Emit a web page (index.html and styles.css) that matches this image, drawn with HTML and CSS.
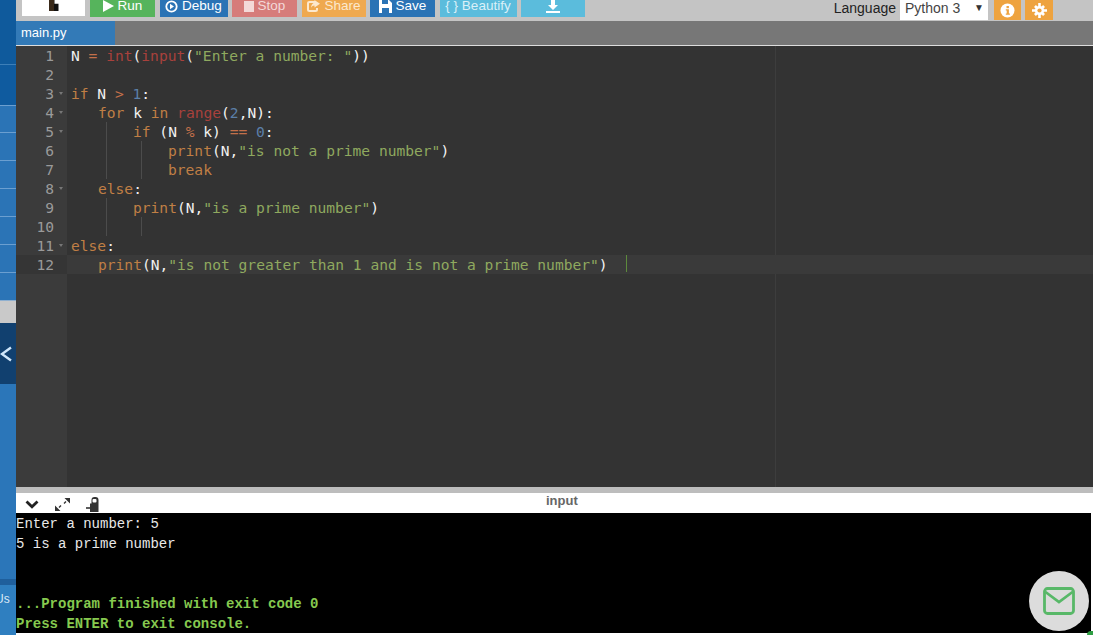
FILE: index.html
```html
<!DOCTYPE html>
<html lang="en">
<head>
  <meta charset="UTF-8" />
  <title>Online Python Compiler</title>
  <link rel="stylesheet" href="styles.css">
</head>
<body>
  <div class="sidebar">
    <div class="side-item tall"></div>
    <div class="side-item dark"></div>
    <div class="side-item first"></div>
    <div class="side-item"></div>
    <div class="side-item"></div>
    <div class="side-item"></div>
    <div class="side-item"></div>
    <div class="side-item"></div>
    <div class="side-item last"></div>
    <div class="side-gap"></div>
    <div class="side-toggle">
      <svg width="12" height="18" viewBox="0 0 12 18"><path d="M11 2.500 2 9l9 6.500" fill="none" stroke="#cfe6fb" stroke-width="2.400"/></svg>
    </div>
    <div class="side-fill"></div>
    <div class="side-us">Us</div>
  </div>

  <div class="main">
    <div class="toolbar">
      <div class="logo"><span class="logo-mark"></span></div>
      <div class="btn green run">
        <svg width="11" height="12" viewBox="0 0 11 12"><path d="M0 0l11 6-11 6z" fill="#fff"/></svg>Run
      </div>
      <div class="btn blue debug">
        <svg width="13" height="13" viewBox="0 0 13 13"><circle cx="6.500" cy="6.500" r="5.200" fill="none" stroke="#fff" stroke-width="1.800"/><path d="M5 3.800l4 2.700-4 2.700z" fill="#fff"/></svg>Debug
      </div>
      <div class="btn red stop">
        <svg width="10" height="11" viewBox="0 0 10 11"><rect width="10" height="11" fill="#f3d9d8"/></svg>Stop
      </div>
      <div class="btn orange share">
        <svg width="14" height="13" viewBox="0 0 14 13"><path d="M9 2H3.500A1.500 1.500 0 0 0 2 3.500v6A1.500 1.500 0 0 0 3.500 11h6A1.500 1.500 0 0 0 11 9.500V8" fill="none" stroke="#fce8cd" stroke-width="2"/><path d="M8.500 0 14 3.800 8.500 7.500V5.500C6.500 5.500 5.500 6.500 5 8c0-3 1.500-5 3.500-5.300z" fill="#fce8cd"/></svg>Share
      </div>
      <div class="btn blue save">
        <svg width="13" height="13" viewBox="0 0 13 13"><path d="M0 0h10l3 3v10H0z" fill="#fff"/><rect x="3" y="0" width="6" height="4" fill="#2a73b5"/><rect x="3" y="8" width="7" height="5" fill="#2a73b5"/></svg>Save
      </div>
      <div class="btn cyan beautify">{ } Beautify</div>
      <div class="btn cyan download">
        <svg width="14" height="13" viewBox="0 0 14 13"><path d="M5 0h4v5h3L7 10 2 5h3z" fill="#fff"/><rect y="11" width="14" height="2" fill="#fff"/></svg>
      </div>
      <div class="lang">
        <span class="lang-label">Language</span>
        <div class="lang-select"><span>Python 3</span><span class="caret">▼</span></div>
        <div class="square info">
          <svg width="15" height="15" viewBox="0 0 15 15"><circle cx="7.500" cy="7.500" r="7" fill="#fff"/><rect x="6.500" y="3" width="2.400" height="2.200" fill="#eea33f"/><path d="M5.800 6.300h3.100v4.200h1v1.200H5.800v-1.200h.9V7.500h-.9z" fill="#eea33f"/></svg>
        </div>
        <div class="square">
          <svg width="15" height="15" viewBox="0 0 15 15"><path d="M6.200 0h2.600v15H6.200zM0 6.200h15v2.600H0zM2 3.900 3.900 2 13 11.100 11.100 13zM11.100 2 13 3.900 3.900 13 2 11.100z" fill="#fff"/><circle cx="7.500" cy="7.500" r="4.600" fill="#fff"/><circle cx="7.500" cy="7.500" r="2.100" fill="#eea33f"/></svg>
        </div>
      </div>
    </div>

    <div class="tabs"><div class="tab">main.py</div></div>

    <div class="editor">
      <div class="gutter">
        <div class="num">1</div>
        <div class="num">2</div>
        <div class="num fold">3</div>
        <div class="num fold">4</div>
        <div class="num fold">5</div>
        <div class="num">6</div>
        <div class="num">7</div>
        <div class="num fold">8</div>
        <div class="num">9</div>
        <div class="num">10</div>
        <div class="num fold">11</div>
        <div class="num current">12</div>
      </div>
      <div class="code">
        <div class="margin-line"></div>
        <div class="line">N <span class="op">=</span> <span class="fn">int</span>(<span class="fn">input</span>(<span class="str">"Enter a number: "</span>))</div>
        <div class="line"></div>
        <div class="line"><span class="kw">if</span> N <span class="op">&gt;</span> <span class="n">1</span>:</div>
        <div class="line i1"><span class="kw">for</span> k <span class="kw">in</span> <span class="fn">range</span>(<span class="n">2</span>,N):</div>
        <div class="line i2 g1"><span class="kw">if</span> (N <span class="op">%</span> k) <span class="op">==</span> <span class="n">0</span>:</div>
        <div class="line i3 g1 g2"><span class="kw">print</span>(N,<span class="str">"is not a prime number"</span>)</div>
        <div class="line i3 g1 g2"><span class="kw">break</span></div>
        <div class="line i1"><span class="kw">else</span>:</div>
        <div class="line i2 g1"><span class="kw">print</span>(N,<span class="str">"is a prime number"</span>)</div>
        <div class="line g1 g2"></div>
        <div class="line"><span class="kw">else</span>:</div>
        <div class="line i1 current"><span class="kw">print</span>(N,<span class="str">"is not greater than 1 and is not a prime number"</span>)<span class="cursor"></span></div>
      </div>
    </div>

    <div class="console-head">
      <div class="console-icons">
        <svg width="14" height="9" viewBox="0 0 14 9"><path d="M1.500 1.500 7 6.800l5.500-5.300" fill="none" stroke="#222" stroke-width="2.800"/></svg>
        <svg width="15" height="15" viewBox="0 0 15 15"><path d="M9.500 1H15v5.500zM5.500 14H0V8.500z" fill="#333"/><path d="M11 4.500 9 6.500M4 10.500l2-2" stroke="#333" stroke-width="1.400"/></svg>
        <svg width="13" height="15" viewBox="0 0 13 15"><path d="M4 15V6.500h1.500V3a3 3 0 0 1 3-3h1a3 3 0 0 1 3 3v12z" fill="#333"/><rect x="6.500" y="2" width="4" height="3.500" rx="1" fill="#fff"/><path d="M0 11h4" stroke="#333" stroke-width="1.600"/></svg>
      </div>
      <span class="console-title">input</span>
    </div>
    <div class="console">
      <div class="out">Enter a number: 5</div>
      <div class="out">5 is a prime number</div>
      <div class="out"></div>
      <div class="out"></div>
      <div class="out done">...Program finished with exit code 0</div>
      <div class="out done">Press ENTER to exit console.</div>
    </div>
  </div>

  <div class="mail">
    <svg width="32" height="28" viewBox="0 0 32 28"><rect x="1.500" y="1.500" width="29" height="25" rx="3" fill="none" stroke="#58b868" stroke-width="2.800"/><path d="M2.500 5 16 15 29.500 5" fill="none" stroke="#58b868" stroke-width="2.800"/></svg>
  </div>
  <div class="corner"></div>
</body>
</html>
```

FILE: styles.css
```css
html, body {
  margin: 0;
  height: 635px;
  overflow: hidden;
}
body {
  display: flex;
  font-family: "Liberation Sans", Arial, sans-serif;
  background: #fff;
}

/* left nav strip */
.sidebar {
  width: 16px;
  flex: none;
  display: flex;
  flex-direction: column;
  background: #2b76b9;
}
.side-item {
  height: 27px;
  border-bottom: 1px solid #6b9fd0;
  background: #2b74b6;
}
.side-item.tall {
  height: 64px;
  background: #0f5a9c;
  border-bottom-color: #3d7fb8;
}
.side-item.dark {
  height: 40px;
  background: #0f5b9f;
}
.side-item.first { height: 26px; }
.side-item.last { border-bottom: 0; }
.side-gap {
  height: 22px;
  background: #c9c9c9;
  border-top: 1px solid #8fb0d0;
}
.side-toggle {
  height: 61px;
  background: #11406f;
  display: flex;
  align-items: center;
}
.side-fill {
  flex: 1;
  border-bottom: 6px solid #1f5f9c;
}
.side-us {
  height: 50px;
  padding-top: 6px;
  box-sizing: border-box;
  font-size: 12px;
  line-height: 16px;
  color: #dbe9f6;
  background: #2f7fc0;
  overflow: hidden;
  text-indent: -5px;
}

.main {
  flex: 1;
  min-width: 0;
  display: flex;
  flex-direction: column;
}

/* toolbar */
.toolbar {
  height: 21px;
  flex: none;
  display: flex;
  gap: 4.5px;
  padding-left: 6px;
  background: #c4c4c4;
  overflow: hidden;
}
.logo {
  width: 63px;
  height: 16px;
  margin-right: 0.5px;
  background: #fff;
  display: flex;
  justify-content: center;
}
.logo-mark {
  width: 10px;
  height: 11px;
  background: linear-gradient(90deg, #3a2a1a 50%, #111 50%);
  clip-path: polygon(0 0, 60% 0, 60% 35%, 100% 35%, 100% 100%, 0 100%);
}
.btn {
  height: 17px;
  padding-bottom: 5px;
  box-sizing: border-box;
  display: flex;
  align-items: center;
  justify-content: center;
  gap: 4px;
  font-size: 13.5px;
  line-height: 14px;
  color: #fff;
}
.btn svg { flex: none; }
.run { width: 65px; }
.debug { width: 68px; }
.stop { width: 65px; }
.share { width: 64px; }
.save { width: 65px; }
.beautify { width: 77px; }
.download { width: 64px; }
.green { background: #56b45c; }
.blue { background: #2a73b5; }
.red { background: #d67c7a; color: #f3d9d8; }
.orange { background: #efa94f; color: #fce8cd; }
.cyan { background: #5bbcdc; color: #daf0f8; }

.lang {
  margin-left: auto;
  display: flex;
  align-items: flex-start;
  padding-right: 40px;
}
.lang-label {
  font-size: 14px;
  line-height: 16px;
  color: #222;
  margin-right: 4px;
}
.lang-select {
  width: 88px;
  height: 20px;
  box-sizing: border-box;
  padding: 0 4px 0 5px;
  background: #fff;
  display: flex;
  justify-content: space-between;
  font-size: 14px;
  line-height: 16px;
  color: #444;
}
.caret {
  font-size: 10px;
  color: #333;
}
.square {
  width: 28px;
  height: 20px;
  margin-left: 4px;
  background: #eea33f;
  display: flex;
  align-items: center;
  justify-content: center;
}
.square.info {
  width: 27px;
  margin-left: 6px;
}

/* file tabs */
.tabs {
  height: 24px;
  flex: none;
  background: #777;
  border-bottom: 1px solid #ddd;
}
.tab {
  width: 99px;
  height: 24px;
  padding-left: 5px;
  box-sizing: border-box;
  background: #337ab7;
  color: #fff;
  font-size: 13px;
  line-height: 24px;
}

/* editor */
.editor {
  height: 441px;
  flex: none;
  display: flex;
  background: #333;
  font-family: "DejaVu Sans Mono", monospace;
  font-size: 14.6px;
  line-height: 19px;
  border-bottom: 6px solid #bdbdbd;
  overflow: hidden;
}
.gutter {
  width: 51px;
  flex: none;
  background: #3b3b3b;
  color: #9a9a9a;
}
.num {
  padding-right: 13px;
  text-align: right;
  position: relative;
}
.num.fold::after {
  content: "";
  position: absolute;
  right: 4px;
  top: 8px;
  border-left: 2.500px solid transparent;
  border-right: 2.500px solid transparent;
  border-top: 3px solid #777;
}
.num.current { background: #353535; }
.code {
  flex: 1;
  position: relative;
  color: #f2f2f2;
}
.margin-line {
  position: absolute;
  left: 708px;
  top: 0;
  bottom: 0;
  width: 1px;
  background: #3d3d3d;
}
.line {
  height: 19px;
  padding-left: 4px;
  white-space: pre;
  position: relative;
}
.line.current { background: #3a3a3a; }
.i1 { padding-left: 31px; }
.i2 { padding-left: 66px; }
.i3 { padding-left: 101px; }
.g1::before, .g2::after {
  content: "";
  position: absolute;
  top: 0;
  bottom: 0;
  width: 1px;
  background: #4c4c4c;
}
.g1::before { left: 39px; }
.g2::after { left: 74px; }
.kw { color: #c07f45; }
.fn { color: #a8413c; }
.op { color: #c4704a; }
.n { color: #5b7fa8; }
.str { color: #8fa95f; }
.cursor {
  display: inline-block;
  width: 1px;
  height: 17px;
  margin-left: 18px;
  vertical-align: top;
  background: #5d8a3c;
}

/* console */
.console-head {
  height: 20px;
  flex: none;
  position: relative;
  background: #fff;
}
.console-icons {
  display: flex;
  align-items: center;
  gap: 16px;
  height: 20px;
  padding: 2px 0 0 9px;
  box-sizing: border-box;
}
.console-title {
  position: absolute;
  left: 530px;
  top: 0;
  font-size: 13px;
  font-weight: bold;
  line-height: 16px;
  color: #666;
}
.console {
  flex: 1;
  margin-right: 2px;
  padding-top: 1px;
  background: #000;
  color: #e8e8e8;
  font-family: "Liberation Mono", "Courier New", monospace;
  font-size: 14px;
  line-height: 20px;
  border-bottom: 2px solid #fff;
  overflow: hidden;
}
.out { height: 20px; white-space: pre; }
.done { color: #86c94f; font-weight: bold; }

/* floating mail button */
.mail {
  position: absolute;
  left: 1029px;
  top: 571px;
  width: 60px;
  height: 60px;
  border-radius: 50%;
  background: #dcdcdc;
  display: flex;
  align-items: center;
  justify-content: center;
}
.corner {
  position: absolute;
  left: 1087px;
  top: 631px;
  width: 6px;
  height: 4px;
  border-radius: 4px 0 0 0;
  background: #2f9e44;
}
```
